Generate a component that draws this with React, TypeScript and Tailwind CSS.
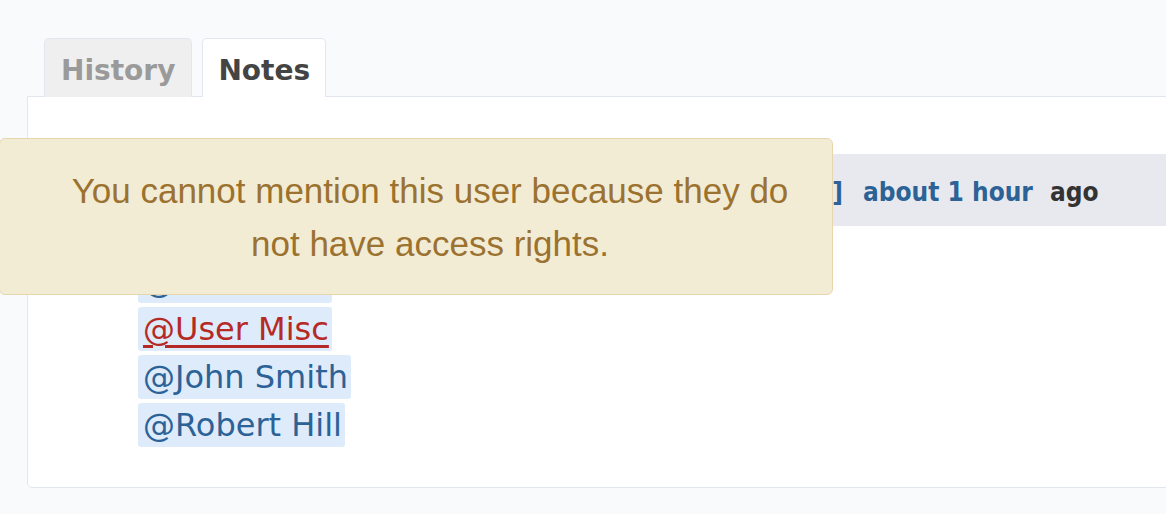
import React from "react";

export default function App() {
  const mentions = [
    { name: "@User Misc", red: false },
    { name: "@User Misc", red: true },
    { name: "@John Smith", red: false },
    { name: "@Robert Hill", red: false },
  ];
  return (
    <div className="relative w-[1166px] h-[514px] overflow-hidden bg-[#f8fafc]">
      <div className="pt-[38px] pl-[27px]">
        <div className="flex items-end gap-[10px] pl-[17px] relative z-10 -mb-px">
          <div className="h-[59px] px-[16px] pt-[6px] flex items-center bg-[#efefef] border border-[#e2e7ef] border-b-0 rounded-t-[5px] font-['DejaVu_Sans',sans-serif] font-bold text-[28px] text-[#9a9a9a]">
            History
          </div>
          <div className="h-[59px] px-[15px] pt-[6px] flex items-center bg-white border border-[#e2e7ef] border-b-0 rounded-t-[5px] font-['DejaVu_Sans',sans-serif] font-bold text-[28px] text-[#444444]">
            Notes
          </div>
        </div>
        <div className="w-[1200px] h-[392px] bg-white border border-[#e2e7ef] rounded-bl-[5px] pt-[57px]">
          <div className="ml-[60px] h-[72px] pt-[4px] bg-[#e8e9ef] flex items-center font-['DejaVu_Sans_Condensed','DejaVu_Sans',sans-serif] font-bold text-[26px]">
            <span className="w-[755px] text-right whitespace-nowrap overflow-hidden text-[#2c6296]">
              Admin User [01/15/2024 10:30 PM]
            </span>
            <span className="ml-[20px] text-[#2c6296]">about 1 hour</span>
            <span className="ml-[17px] text-[#333333]">ago</span>
          </div>
          <div className="pl-[110px] pt-[33px] flex flex-col items-start gap-[4px] font-['DejaVu_Sans',sans-serif] text-[32px]">
            {mentions.map((m, i) => (
              <span
                key={i}
                className={
                  m.red
                    ? "h-[44px] leading-[44px] pl-[5px] pr-[3px] bg-[#deebfb] rounded-[3px] text-[#b52a25] underline decoration-[3px] underline-offset-[5px]"
                    : "h-[44px] leading-[44px] pl-[5px] pr-[3px] bg-[#deebfb] rounded-[3px] text-[#2c6296]"
                }
              >
                {m.name}
              </span>
            ))}
          </div>
        </div>
      </div>
      <div className="absolute left-[-1px] top-[138px] w-[834px] h-[157px] pl-[28px] bg-[#f3ecd5] border border-[#e5d6ad] rounded-[6px] flex items-center justify-center text-center font-['Liberation_Sans',Arial,sans-serif] text-[35px] leading-[53px] text-[#9b7230] z-20">
        <div className="whitespace-nowrap">
          You cannot mention this user because they do
          <br />
          not have access rights.
        </div>
      </div>
    </div>
  );
}
